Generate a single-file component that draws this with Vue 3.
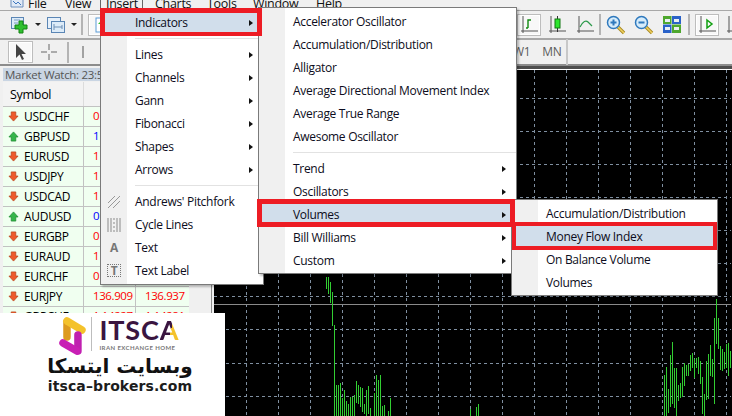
<template>
  <div class="screen">
    <!-- menu bar, cut off at the top of the picture -->
    <div class="menubar">
      <svg class="app-icon" width="14" height="8" viewBox="0 0 14 8"><path d="M1 0v7h12V0" fill="#dfe9f5" stroke="#6c8fbc"/><path d="M3 1l3 3 2-2 3 3" fill="none" stroke="#3f78c0"/></svg>
      <span v-for="m in menuNames" :key="m" class="menu-name" :class="{ open: m === 'Insert' }">{{ m }}</span>
    </div>

    <!-- first toolbar -->
    <div class="toolbar bar-one">
      <div class="bar-left">
        <span class="tool">
          <svg width="20" height="20" viewBox="0 0 20 20"><rect x="1.5" y="2.5" width="12" height="11" fill="#dcebf8" stroke="#5b86b5"/><path d="M4 5h6M4 8h4" stroke="#7a9cc0"/><path d="M9 6h4v4h4v4h-4v4H9v-4H5v-4h4z" fill="#2fc02f" stroke="#128312"/></svg>
        </span>
        <span class="caret"></span>
        <span class="tool second">
          <svg width="20" height="20" viewBox="0 0 20 20"><rect x="1.5" y="2.5" width="13" height="11" fill="#e6f0fa" stroke="#5b86b5"/><rect x="5.5" y="6.5" width="13" height="11" fill="#dcebf8" stroke="#5b86b5"/><path d="M8 12h8M8 9v6M16 10v4" stroke="#6c8fb5"/></svg>
        </span>
        <span class="caret"></span>
        <span class="sep"></span>
        <span class="tool picked">
          <svg width="14" height="16" viewBox="0 0 14 16"><rect x="1" y="1" width="12" height="14" fill="#fff" stroke="#5b9bd5"/><path d="M7 3l4 4H9v4H5V7H3z" fill="#2fc02f"/></svg>
        </span>
      </div>
      <div class="bar-right">
        <span class="tool picked">
          <svg width="20" height="20" viewBox="0 0 20 20"><path d="M4 1v15h15" fill="none" stroke="#555"/><path d="M2 16h2M4 18v-2" stroke="#555"/><path d="M9 13V5h3M9 13H7" fill="none" stroke="#118a11" stroke-width="1.4"/></svg>
        </span>
        <span class="tool">
          <svg width="20" height="20" viewBox="0 0 20 20"><path d="M4 1v15h15M2 16h2M4 18v-2" fill="none" stroke="#555"/><path d="M10.5 1v16" stroke="#333"/><rect x="8" y="4" width="5" height="9" fill="#2ee62e" stroke="#117711"/></svg>
        </span>
        <span class="tool">
          <svg width="20" height="20" viewBox="0 0 20 20"><path d="M4 1v15h15M2 16h2M4 18v-2" fill="none" stroke="#555"/><path d="M5 12c3-6 6-7 8-5l4 4" fill="none" stroke="#2c9a4b" stroke-width="1.2"/></svg>
        </span>
        <span class="sep wide"></span>
        <span class="tool">
          <svg width="20" height="20" viewBox="0 0 20 20"><path d="M12 12l6 6" stroke="#a88a20" stroke-width="3.4"/><path d="M12 12l6 6" stroke="#f0d060" stroke-width="1.6"/><circle cx="7.5" cy="7.5" r="6" fill="#d6ecfb" stroke="#2f79bd" stroke-width="1.5"/><path d="M7.5 4.5v6M4.5 7.500h6" stroke="#2f79bd" stroke-width="2"/></svg>
        </span>
        <span class="tool">
          <svg width="20" height="20" viewBox="0 0 20 20"><path d="M12 12l6 6" stroke="#a88a20" stroke-width="3.4"/><path d="M12 12l6 6" stroke="#f0d060" stroke-width="1.6"/><circle cx="7.500" cy="7.500" r="6" fill="#d6ecfb" stroke="#2f79bd" stroke-width="1.5"/><path d="M4.500 7.500h6" stroke="#2f79bd" stroke-width="2"/></svg>
        </span>
        <span class="tool">
          <svg width="18" height="17" viewBox="0 0 18 17"><rect width="8.500" height="8" fill="#4ea72e"/><rect x="9" width="9" height="8" fill="#2a62c8"/><rect y="8.500" width="8.500" height="8.500" fill="#2a62c8"/><rect x="9" y="8.500" width="9" height="8.500" fill="#4ea72e"/><path d="M2 3h5v3H2zM11 3h5v3h-5zM2 11h5v3H2zM11 11h5v3h-5z" fill="#e8eef4"/></svg>
        </span>
        <span class="sep"></span>
        <span class="tool picked">
          <svg width="20" height="20" viewBox="0 0 20 20"><path d="M4 1v15h15M2 16h2M4 18v-2" fill="none" stroke="#555"/><path d="M10 5l5 4-5 4z" fill="none" stroke="#11a011" stroke-width="1.500"/></svg>
        </span>
        <span class="tool">
          <svg width="20" height="20" viewBox="0 0 20 20"><path d="M4 1v15h15M2 16h2M4 18v-2" fill="none" stroke="#555"/></svg>
        </span>
      </div>
    </div>

    <!-- second toolbar -->
    <div class="toolbar bar-two">
      <span class="tool picked cursor">
        <svg width="12" height="16" viewBox="0 0 12 16"><path d="M1 0v14l3.500-3.500L7 16l2-1-2.500-5H11z" fill="#444"/></svg>
      </span>
      <span class="tool">
        <svg width="16" height="16" viewBox="0 0 16 16"><path d="M8 0v6M8 10v6M0 8h6M10 8h6" stroke="#666"/></svg>
      </span>
      <span class="sep"></span>
      <span class="tool narrow">
        <svg width="4" height="14" viewBox="0 0 4 14"><path d="M2 1v12" stroke="#555"/></svg>
      </span>
      <div class="periods">
        <span class="period">W1</span>
        <span class="period">MN</span>
      </div>
      <span class="sep last"></span>
    </div>

    <div class="workspace">
      <!-- market watch -->
      <div class="watch">
        <div class="watch-title">Market Watch: 23:58</div>
        <div class="watch-head">
          <span class="col-symbol">Symbol</span>
          <span class="col-price"></span>
        </div>
        <div v-for="row in quotes" :key="row.symbol" class="quote">
          <span class="col-symbol">
            <svg v-if="row.up" class="dir" width="11" height="11" viewBox="0 0 12 12"><path d="M6 1l5 5.500H8.500V11h-5V6.500H1z" fill="#35b54a" stroke="#1c8a30" stroke-width=".8"/></svg>
            <svg v-else class="dir" width="11" height="11" viewBox="0 0 12 12"><path d="M6 11L1 5.500h2.500V1h5v4.500H11z" fill="#ee5a2c" stroke="#b8431c" stroke-width=".8"/></svg>
            {{ row.symbol }}
          </span>
          <span class="col-price" :class="row.up ? 'blue' : 'red'">{{ row.bid }}</span>
          <span class="col-ask" :class="row.up ? 'blue' : 'red'">{{ row.ask }}</span>
        </div>
      </div>

      <!-- chart -->
      <div class="chart">
        <svg class="chart-svg" width="517" height="347" viewBox="215 69 517 347">
          <line v-for="x in gridX" :key="'x' + x" :x1="x + 0.5" :x2="x + 0.5" y1="69" y2="416" class="grid" />
          <line v-for="y in gridY" :key="'y' + y" x1="215" x2="732" :y1="y + 0.5" :y2="y + 0.5" class="grid" />
          <line x1="215" x2="732" y1="303.5" y2="303.5" class="price-line" />
          <line v-for="(b, i) in bars" :key="i" :x1="b[0] + 0.5" :x2="b[0] + 0.5" :y1="b[1]" :y2="b[2]" class="bar" />
        </svg>
      </div>
    </div>

    <!-- open menus -->
    <div class="menu menu-insert">
      <template v-for="(item, i) in insertItems" :key="i">
        <div v-if="item.sep" class="menu-sep"></div>
        <div v-else class="menu-item" :class="{ active: item.active }">
          <span class="gutter">
            <svg v-if="item.icon === 'fork'" width="14" height="14" viewBox="0 0 14 14"><path d="M1 8l7-7M1 13L13 1M6 13l7-7" stroke="#999" fill="none"/></svg>
            <svg v-if="item.icon === 'cycle'" width="14" height="16" viewBox="0 0 14 16"><path d="M1 1v14M4 1v14M13 1v14M10 1v14" stroke="#8a8a8a"/><path d="M7 1v14" stroke="#8a8a8a" stroke-dasharray="2 2"/></svg>
            <b v-if="item.icon === 'a'" class="glyph">A</b>
            <b v-if="item.icon === 't'" class="glyph boxed">T</b>
          </span>
          {{ item.label }}
          <span v-if="item.more" class="more"></span>
        </div>
      </template>
    </div>

    <div class="menu menu-indicators">
      <template v-for="(item, i) in indicatorItems" :key="i">
        <div v-if="item.sep" class="menu-sep"></div>
        <div v-else class="menu-item" :class="{ active: item.active }">
          <span class="gutter"></span>
          {{ item.label }}
          <span v-if="item.more" class="more"></span>
        </div>
      </template>
    </div>

    <div class="menu menu-volumes">
      <div v-for="item in volumeItems" :key="item.label" class="menu-item" :class="{ active: item.active }">
        <span class="gutter"></span>
        {{ item.label }}
      </div>
    </div>

    <!-- red marks drawn on the screenshot -->
    <div class="mark mark-indicators"></div>
    <div class="mark mark-volumes"></div>
    <div class="mark mark-mfi"></div>

    <!-- logo block -->
    <div class="logo">
      <div class="logo-top">
        <svg width="32" height="38" viewBox="0 0 32 38">
          <path d="M9 20V5" stroke="#dd9a1e" stroke-width="7.500" stroke-linecap="round" fill="none"/>
          <path d="M9 4l15 9" stroke="#f4c22b" stroke-width="7.500" stroke-linecap="round" fill="none"/>
          <path d="M20 34V18" stroke="#c020b0" stroke-width="7.500" stroke-linecap="round" fill="none"/>
          <path d="M5 26l14 8" stroke="#c81fb4" stroke-width="7.500" stroke-linecap="round" fill="none"/>
        </svg>
        <span class="logo-rule"></span>
        <div class="logo-words">
          <div class="logo-name">ITSC<span class="logo-a">A</span></div>
          <div class="logo-tag">IRAN EXCHANGE HOME</div>
        </div>
      </div>
      <div class="logo-fa">وبسایت ایتسکا</div>
      <div class="logo-url">itsca–brokers.com</div>
    </div>
  </div>
</template>

<script setup>
const menuNames = ['File', 'View', 'Insert', 'Charts', 'Tools', 'Window', 'Help']

// only the part of each price that is not hidden by the menu
const quotes = [
  { symbol: 'USDCHF', bid: '0', ask: '', up: false },
  { symbol: 'GBPUSD', bid: '1', ask: '', up: true },
  { symbol: 'EURUSD', bid: '1', ask: '', up: false },
  { symbol: 'USDJPY', bid: '1', ask: '', up: false },
  { symbol: 'USDCAD', bid: '1', ask: '', up: false },
  { symbol: 'AUDUSD', bid: '0', ask: '', up: true },
  { symbol: 'EURGBP', bid: '0', ask: '', up: false },
  { symbol: 'EURAUD', bid: '1', ask: '', up: false },
  { symbol: 'EURCHF', bid: '0', ask: '', up: false },
  { symbol: 'EURJPY', bid: '136.909', ask: '136.937', up: false },
  { symbol: 'GBPCHF', bid: '1.14227', ask: '1.14281', up: false }
]

const insertItems = [
  { label: 'Indicators', more: true, active: true },
  { sep: true },
  { label: 'Lines', more: true },
  { label: 'Channels', more: true },
  { label: 'Gann', more: true },
  { label: 'Fibonacci', more: true },
  { label: 'Shapes', more: true },
  { label: 'Arrows', more: true },
  { sep: true },
  { label: "Andrews' Pitchfork", icon: 'fork' },
  { label: 'Cycle Lines', icon: 'cycle' },
  { label: 'Text', icon: 'a' },
  { label: 'Text Label', icon: 't' }
]

const indicatorItems = [
  { label: 'Accelerator Oscillator' },
  { label: 'Accumulation/Distribution' },
  { label: 'Alligator' },
  { label: 'Average Directional Movement Index' },
  { label: 'Average True Range' },
  { label: 'Awesome Oscillator' },
  { sep: true },
  { label: 'Trend', more: true },
  { label: 'Oscillators', more: true },
  { label: 'Volumes', more: true, active: true },
  { label: 'Bill Williams', more: true },
  { label: 'Custom', more: true }
]

const volumeItems = [
  { label: 'Accumulation/Distribution' },
  { label: 'Money Flow Index', active: true },
  { label: 'On Balance Volume' },
  { label: 'Volumes' }
]

const gridX = Array.from({ length: 16 }, (_, i) => 247 + i * 32)
const gridY = [97, 130, 163, 196, 229, 262, 295, 328, 362, 395]

// [x, top, bottom] in page pixels, read off the reference
const bars = [
  [327, 276, 288], [329, 276, 293], [331, 281, 302], [333, 291, 325], [335, 324, 416],
  [337, 384, 416], [339, 384, 416], [341, 382, 416], [343, 397, 416], [345, 389, 416],
  [347, 400, 416], [349, 403, 416], [351, 396, 416], [353, 396, 416], [355, 394, 416],
  [357, 380, 402], [359, 384, 403], [361, 386, 406], [363, 387, 411], [365, 403, 413],
  [367, 389, 416], [369, 385, 413], [371, 407, 416], [375, 392, 416], [377, 374, 416],
  [379, 379, 416], [381, 374, 416], [383, 405, 416], [385, 404, 416], [389, 410, 416],
  [391, 397, 416], [471, 408, 416], [477, 406, 416], [479, 403, 416],
  [665, 374, 416], [667, 366, 416], [669, 388, 412], [671, 354, 406], [673, 341, 403],
  [675, 367, 407], [677, 367, 416], [679, 384, 400], [681, 382, 397], [683, 366, 396],
  [685, 362, 385], [687, 364, 375], [689, 363, 375], [691, 354, 370], [693, 352, 367],
  [695, 358, 377], [697, 357, 367], [699, 356, 373], [701, 360, 383], [703, 376, 413],
  [705, 393, 416], [707, 360, 399], [709, 353, 398], [711, 344, 375], [713, 358, 376],
  [715, 317, 403], [717, 298, 343], [719, 317, 348], [721, 345, 369], [723, 348, 370],
  [725, 351, 368], [727, 343, 367], [729, 342, 375], [731, 350, 367]
]
</script>

<style scoped>
.screen {
  position: relative;
  width: 732px;
  height: 416px;
  overflow: hidden;
  background: #f0f0f0;
  font-family: "Open Sans", "Noto Sans", sans-serif;
  font-size: 12px;
  letter-spacing: -0.3px;
  color: #000;
}

.menubar {
  display: flex;
  align-items: flex-start;
  height: 10px;
  padding-left: 10px;
  background: #f0f0f0;
  overflow: hidden;
}

.app-icon {
  flex: none;
  width: 14px;
}

.menu-name {
  flex: none;
  box-sizing: border-box;
  height: 9px;
  margin-top: -1px;
  padding-left: 12px;
  line-height: 10px;
  color: #111;
  font-size: 12.5px;
  overflow: visible;
  white-space: nowrap;
}

.menu-name:nth-of-type(1) { width: 38px; padding-left: 4px; }
.menu-name:nth-of-type(2) { width: 38px; padding-left: 3px; }
.menu-name:nth-of-type(3) {
  width: 43px;
  padding-left: 5px;
  border-left: 1px solid #666;
  border-right: 1px solid #666;
}
.menu-name:nth-of-type(4) { width: 52px; }
.menu-name:nth-of-type(5) { width: 46px; }
.menu-name:nth-of-type(6) { width: 63px; }

.toolbar {
  display: flex;
  align-items: center;
  background: #f0f0f0;
  border-top: 1px solid #a8a8a8;
}

.bar-one {
  height: 27px;
}

.bar-two {
  height: 28px;
  border-top: 2px solid #a8a8a8;
  border-bottom: 2px solid #8c8c8c;
  padding-left: 8px;
  box-sizing: border-box;
}

.bar-left {
  flex: none;
  display: flex;
  align-items: center;
  width: 515px;
  padding-left: 6px;
  box-sizing: border-box;
}

.bar-right {
  flex: none;
  display: flex;
  align-items: center;
}

.tool {
  flex: none;
  display: flex;
  align-items: center;
  justify-content: center;
  width: 28px;
  height: 22px;
  box-sizing: border-box;
}

.tool.second {
  margin-left: 1px;
}

.tool.narrow {
  width: 24px;
}

.picked {
  border: 1px solid #bdbdbd;
  background: #f8f8f8;
  outline: 1px solid #fff;
  outline-offset: -2px;
}

.bar-right .picked {
  width: 24px;
  margin: 0 2px;
}

.bar-left .picked {
  margin-left: 3px;
}

.cursor {
  width: 25px;
  margin-right: 2px;
}

.caret {
  flex: none;
  width: 0;
  height: 0;
  margin-left: 1px;
  border-left: 3px solid transparent;
  border-right: 3px solid transparent;
  border-top: 3px solid #222;
}

.sep {
  flex: none;
  width: 2px;
  height: 21px;
  margin: 0 2px 0 4px;
  background: #b4b4b4;
}

.bar-right .sep {
  margin: 0 3px 0 2px;
}

.bar-right .sep.wide {
  margin: 0 1px 0 0;
}

.periods {
  display: flex;
  flex: none;
  gap: 12px;
  margin-left: 418px;
  color: #5c5c5c;
  font-size: 12px;
}

.period {
  line-height: 14px;
}

.sep.last {
  margin-left: 4px;
  background: #c8c8c8;
  height: 26px;
}

.workspace {
  display: flex;
  height: 350px;
}

.watch {
  flex: none;
  width: 212px;
  padding: 2px 0 0 3px;
  box-sizing: border-box;
  background: #f0f0f0;
  border-right: 1px solid #8c8c8c;
}

.watch-title {
  height: 13px;
  line-height: 13px;
  width: 120px;
  padding-left: 2px;
  background: #c9d5e3;
  color: #555;
  font-size: 11.500px;
  white-space: nowrap;
  overflow: hidden;
}

.watch-head {
  display: flex;
  align-items: center;
  width: 186px;
  height: 25px;
  margin-top: 1px;
  background: #f3f3f3;
  border-bottom: 1px solid #c2c2c2;
  box-sizing: border-box;
}

.watch-head .col-symbol {
  height: 100%;
  display: flex;
  align-items: center;
  padding-left: 7px;
  border-right: 1px solid #dcdcdc;
  font-size: 12.5px;
}

.quote {
  display: flex;
  width: 186px;
  height: 20px;
  line-height: 18px;
  background: #f0fff0;
  border-bottom: 1px solid #c2c2c2;
  box-sizing: border-box;
  font-size: 12px;
}

.col-symbol {
  flex: none;
  display: flex;
  align-items: center;
  gap: 5px;
  width: 81px;
  padding-left: 5px;
  box-sizing: border-box;
  border-right: 1px solid #c2c2c2;
}

.col-price {
  flex: none;
  width: 52px;
  padding-left: 9px;
  box-sizing: border-box;
  border-right: 1px solid #c2c2c2;
  font-size: 11.500px;
  letter-spacing: -0.4px;
}

.col-ask {
  flex: none;
  width: 53px;
  padding-left: 9px;
  box-sizing: border-box;
  font-size: 11.500px;
  letter-spacing: -0.4px;
}

.red { color: #ff0000; }
.blue { color: #0000ff; }

.chart {
  flex: 1;
  margin-left: 2px;
  border-top: 3px solid #4d4d4d;
  background: #000;
  box-shadow: inset 0 1px 0 #fff;
}

.chart-svg {
  display: block;
  margin-top: 1px;
}

.grid {
  stroke: #7f8fa0;
  stroke-width: 1;
  stroke-dasharray: 3 3;
}

.price-line {
  stroke: #8a8a8a;
  stroke-width: 1;
}

.bar {
  stroke: #32cd32;
  stroke-width: 1;
}

.menu {
  position: absolute;
  box-sizing: border-box;
  background: linear-gradient(90deg, #f0f0f0 26px, #fff 26px);
  border: 1px solid #7a7a7a;
  padding: 2px 0 1px;
  box-shadow: 2px 2px 2px rgba(0, 0, 0, 0.25);
}

.menu-insert { left: 100px; top: 8px; width: 164px; padding-bottom: 2px; }
.menu-indicators { left: 258px; top: 7px; width: 259px; }
.menu-volumes { left: 511px; top: 199px; width: 207px; }

.menu-item {
  display: flex;
  align-items: center;
  height: 23px;
  padding-right: 10px;
  color: #0c0c20;
  white-space: nowrap;
}

.menu-item.active {
  background: #d1deeb;
}

.gutter {
  flex: none;
  display: flex;
  align-items: center;
  justify-content: center;
  width: 26px;
  margin-right: 8px;
}

.menu-sep {
  height: 1px;
  margin: 4px 0 4px 34px;
  background: #e2e2e2;
}

.more {
  width: 0;
  height: 0;
  margin-left: auto;
  border-top: 3px solid transparent;
  border-bottom: 3px solid transparent;
  border-left: 4px solid #111;
}

.glyph {
  color: #777;
  font-size: 12px;
  line-height: 12px;
}

.glyph.boxed {
  width: 12px;
  text-align: center;
  border: 1px dotted #777;
  line-height: 11px;
}

.mark {
  position: absolute;
  box-sizing: border-box;
  border: solid #ed1c24;
}

.mark-indicators {
  left: 100px;
  top: 8px;
  width: 162px;
  height: 28px;
  border-width: 5px 5px 4px 5px;
}

.mark-volumes {
  left: 257px;
  top: 199px;
  width: 258px;
  height: 28px;
  border-width: 5px;
}

.mark-mfi {
  left: 512px;
  top: 222px;
  width: 205px;
  height: 28px;
  border-width: 4px;
}

.logo {
  position: absolute;
  left: 0;
  top: 313px;
  width: 225px;
  height: 103px;
  background: #fff;
  display: flex;
  flex-direction: column;
  align-items: center;
  padding-top: 4px;
  box-sizing: border-box;
  letter-spacing: 0;
}

.logo-top {
  display: flex;
  align-items: flex-start;
  width: 122px;
  height: 38px;
  margin-left: 12px;
}

.logo-rule {
  flex: none;
  width: 1px;
  height: 34px;
  margin: 0 7px 0 2px;
  background: #bdbdbd;
}

.logo-name {
  font-family: "Lato", sans-serif;
  font-size: 27px;
  line-height: 26px;
  font-weight: 700;
  letter-spacing: 0.9px;
  color: #3a1540;
}

.logo-a {
  background: linear-gradient(105deg, #3a1540 54%, #f4c22b 54%);
  -webkit-background-clip: text;
  background-clip: text;
  color: transparent;
}

.logo-tag {
  margin-top: 1px;
  font-family: "Lato", sans-serif;
  font-size: 6px;
  line-height: 7px;
  font-weight: 700;
  letter-spacing: 0.42px;
  color: #777;
  white-space: nowrap;
}

.logo-fa {
  font-family: "DejaVu Sans", sans-serif;
  font-size: 20px;
  font-weight: 700;
  line-height: 22px;
  color: #111;
  direction: rtl;
  margin-left: 15px;
}

.logo-url {
  font-family: "DejaVu Sans", sans-serif;
  font-size: 14px;
  font-weight: 700;
  line-height: 18px;
  letter-spacing: 0.1px;
  color: #1c1c1c;
  margin-left: 15px;
}
</style>
